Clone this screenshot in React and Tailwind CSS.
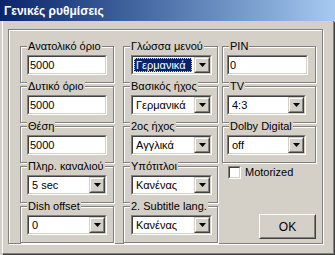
import React from "react";

const GRAY = "bg-[#d4d0c8]";

function Group({ label, children, className = "" }) {
  return (
    <div
      className={`relative h-[37px] border border-[#808080] shadow-[inset_1px_1px_0_#ffffff,1px_1px_0_#ffffff] ${className}`}
    >
      <span className={`absolute left-[6px] -top-[7px] px-[1px] ${GRAY} leading-[13px] whitespace-nowrap`}>
        {label}
      </span>
      {children}
    </div>
  );
}

function Sunken({ className = "", children }) {
  return (
    <div
      className={`h-[20px] border border-t-[#808080] border-l-[#808080] border-r-white border-b-white ${className}`}
    >
      <div className="h-full border border-t-[#404040] border-l-[#404040] border-r-[#d4d0c8] border-b-[#d4d0c8] bg-white flex items-center overflow-hidden">
        {children}
      </div>
    </div>
  );
}

function TextField({ value, className }) {
  return (
    <Sunken className={className}>
      <span className="pl-[1px] leading-[13px]">{value}</span>
    </Sunken>
  );
}

function DropButton() {
  return (
    <div className="w-[16px] h-full border border-t-[#d4d0c8] border-l-[#d4d0c8] border-r-[#404040] border-b-[#404040] shrink-0">
      <div className="h-full border border-t-white border-l-white border-r-[#808080] border-b-[#808080] bg-[#d4d0c8] flex items-center justify-center">
        <svg width="7" height="4" viewBox="0 0 7 4" className="block">
          <path d="M0 0H7L3.5 4Z" fill="#000" />
        </svg>
      </div>
    </div>
  );
}

function Combo({ value, selected = false, className }) {
  return (
    <Sunken className={className}>
      {selected ? (
        <div className="flex-1 h-full p-[1px] pr-[2px]">
          <div className="h-full bg-[#0a246a] text-white border border-dotted border-[#f0d890] flex items-center pl-[1px] leading-[13px]">
            {value}
          </div>
        </div>
      ) : (
        <span className="flex-1 pl-[3px] leading-[13px] whitespace-nowrap">{value}</span>
      )}
      <DropButton />
    </Sunken>
  );
}

export default function App() {
  return (
    <div
      className={`w-[335px] h-[255px] ${GRAY} flex flex-col overflow-hidden text-[11px] text-black font-['Liberation_Sans',Arial,sans-serif]`}
    >
      <div className="h-[21px] shrink-0 bg-linear-to-r from-[#0a246a] to-[#a6caf0] text-white font-bold text-[12px] pl-[4px] flex items-center">
        Γενικές ρυθμίσεις
      </div>
      <div className="flex-1 pl-[2px] flex flex-col">
        <div className="flex-1 mr-[1px] mb-[1px] border-l border-l-white border-r border-r-[#808080] border-b border-b-[#808080] shadow-[1px_1px_0_#404040]">
          <div className="ml-[5px] mt-[8px] w-[315px] h-[215px] border border-[#808080] shadow-[inset_1px_1px_0_#ffffff,1px_1px_0_#ffffff] pt-[16px] pl-[11px] flex">
            {/* Column 1 */}
            <div className="w-[94px] flex flex-col gap-[3px]">
              <Group label="Ανατολικό όριο">
                <TextField value="5000" className="mt-[8px] ml-[6px] w-[80px]" />
              </Group>
              <Group label="Δυτικό όριο">
                <TextField value="5000" className="mt-[8px] ml-[6px] w-[80px]" />
              </Group>
              <Group label="Θέση">
                <TextField value="5000" className="mt-[8px] ml-[6px] w-[80px]" />
              </Group>
              <Group label="Πληρ. καναλιού">
                <Combo value="5 sec" className="mt-[8px] ml-[6px] w-[80px]" />
              </Group>
              <Group label="Dish offset">
                <Combo value="0" className="mt-[8px] ml-[6px] w-[80px]" />
              </Group>
            </div>
            {/* Column 2 */}
            <div className="w-[95px] ml-[9px] flex flex-col gap-[3px]">
              <Group label="Γλώσσα μενού">
                <Combo value="Γερμανικά" selected className="mt-[8px] ml-[7px] w-[81px]" />
              </Group>
              <Group label="Βασικός ήχος">
                <Combo value="Γερμανικά" className="mt-[8px] ml-[7px] w-[81px]" />
              </Group>
              <Group label="2ος ήχος">
                <Combo value="Αγγλικά" className="mt-[8px] ml-[7px] w-[81px]" />
              </Group>
              <Group label="Υπότιτλοι">
                <Combo value="Κανένας" className="mt-[8px] ml-[7px] w-[81px]" />
              </Group>
              <Group label="2. Subtitle lang.">
                <Combo value="Κανένας" className="mt-[8px] ml-[7px] w-[81px]" />
              </Group>
            </div>
            {/* Column 3 */}
            <div className="w-[94px] ml-[4px] flex flex-col gap-[3px]">
              <Group label="PIN">
                <TextField value="0" className="mt-[8px] ml-[4px] w-[81px]" />
              </Group>
              <Group label="TV">
                <Combo value="4:3" className="mt-[8px] ml-[4px] w-[79px]" />
              </Group>
              <Group label="Dolby Digital">
                <Combo value="off" className="mt-[8px] ml-[4px] w-[79px]" />
              </Group>
              <div className="flex items-center mt-[0px] ml-[6px] h-[13px]">
                <div className="w-[13px] h-[13px] border border-t-[#808080] border-l-[#808080] border-r-white border-b-white">
                  <div className="h-full border border-t-[#404040] border-l-[#404040] border-r-[#d4d0c8] border-b-[#d4d0c8] bg-white" />
                </div>
                <span className="ml-[4px] leading-[13px]">Motorized</span>
              </div>
              <div className="ml-auto mt-[32px] w-[57px] h-[25px] border border-t-white border-l-white border-r-[#404040] border-b-[#404040]">
                <div className="h-full border border-t-[#d4d0c8] border-l-[#d4d0c8] border-r-[#808080] border-b-[#808080] flex items-center justify-center text-[12px] leading-[14px]">
                  OK
                </div>
              </div>
            </div>
          </div>
        </div>
      </div>
    </div>
  );
}
